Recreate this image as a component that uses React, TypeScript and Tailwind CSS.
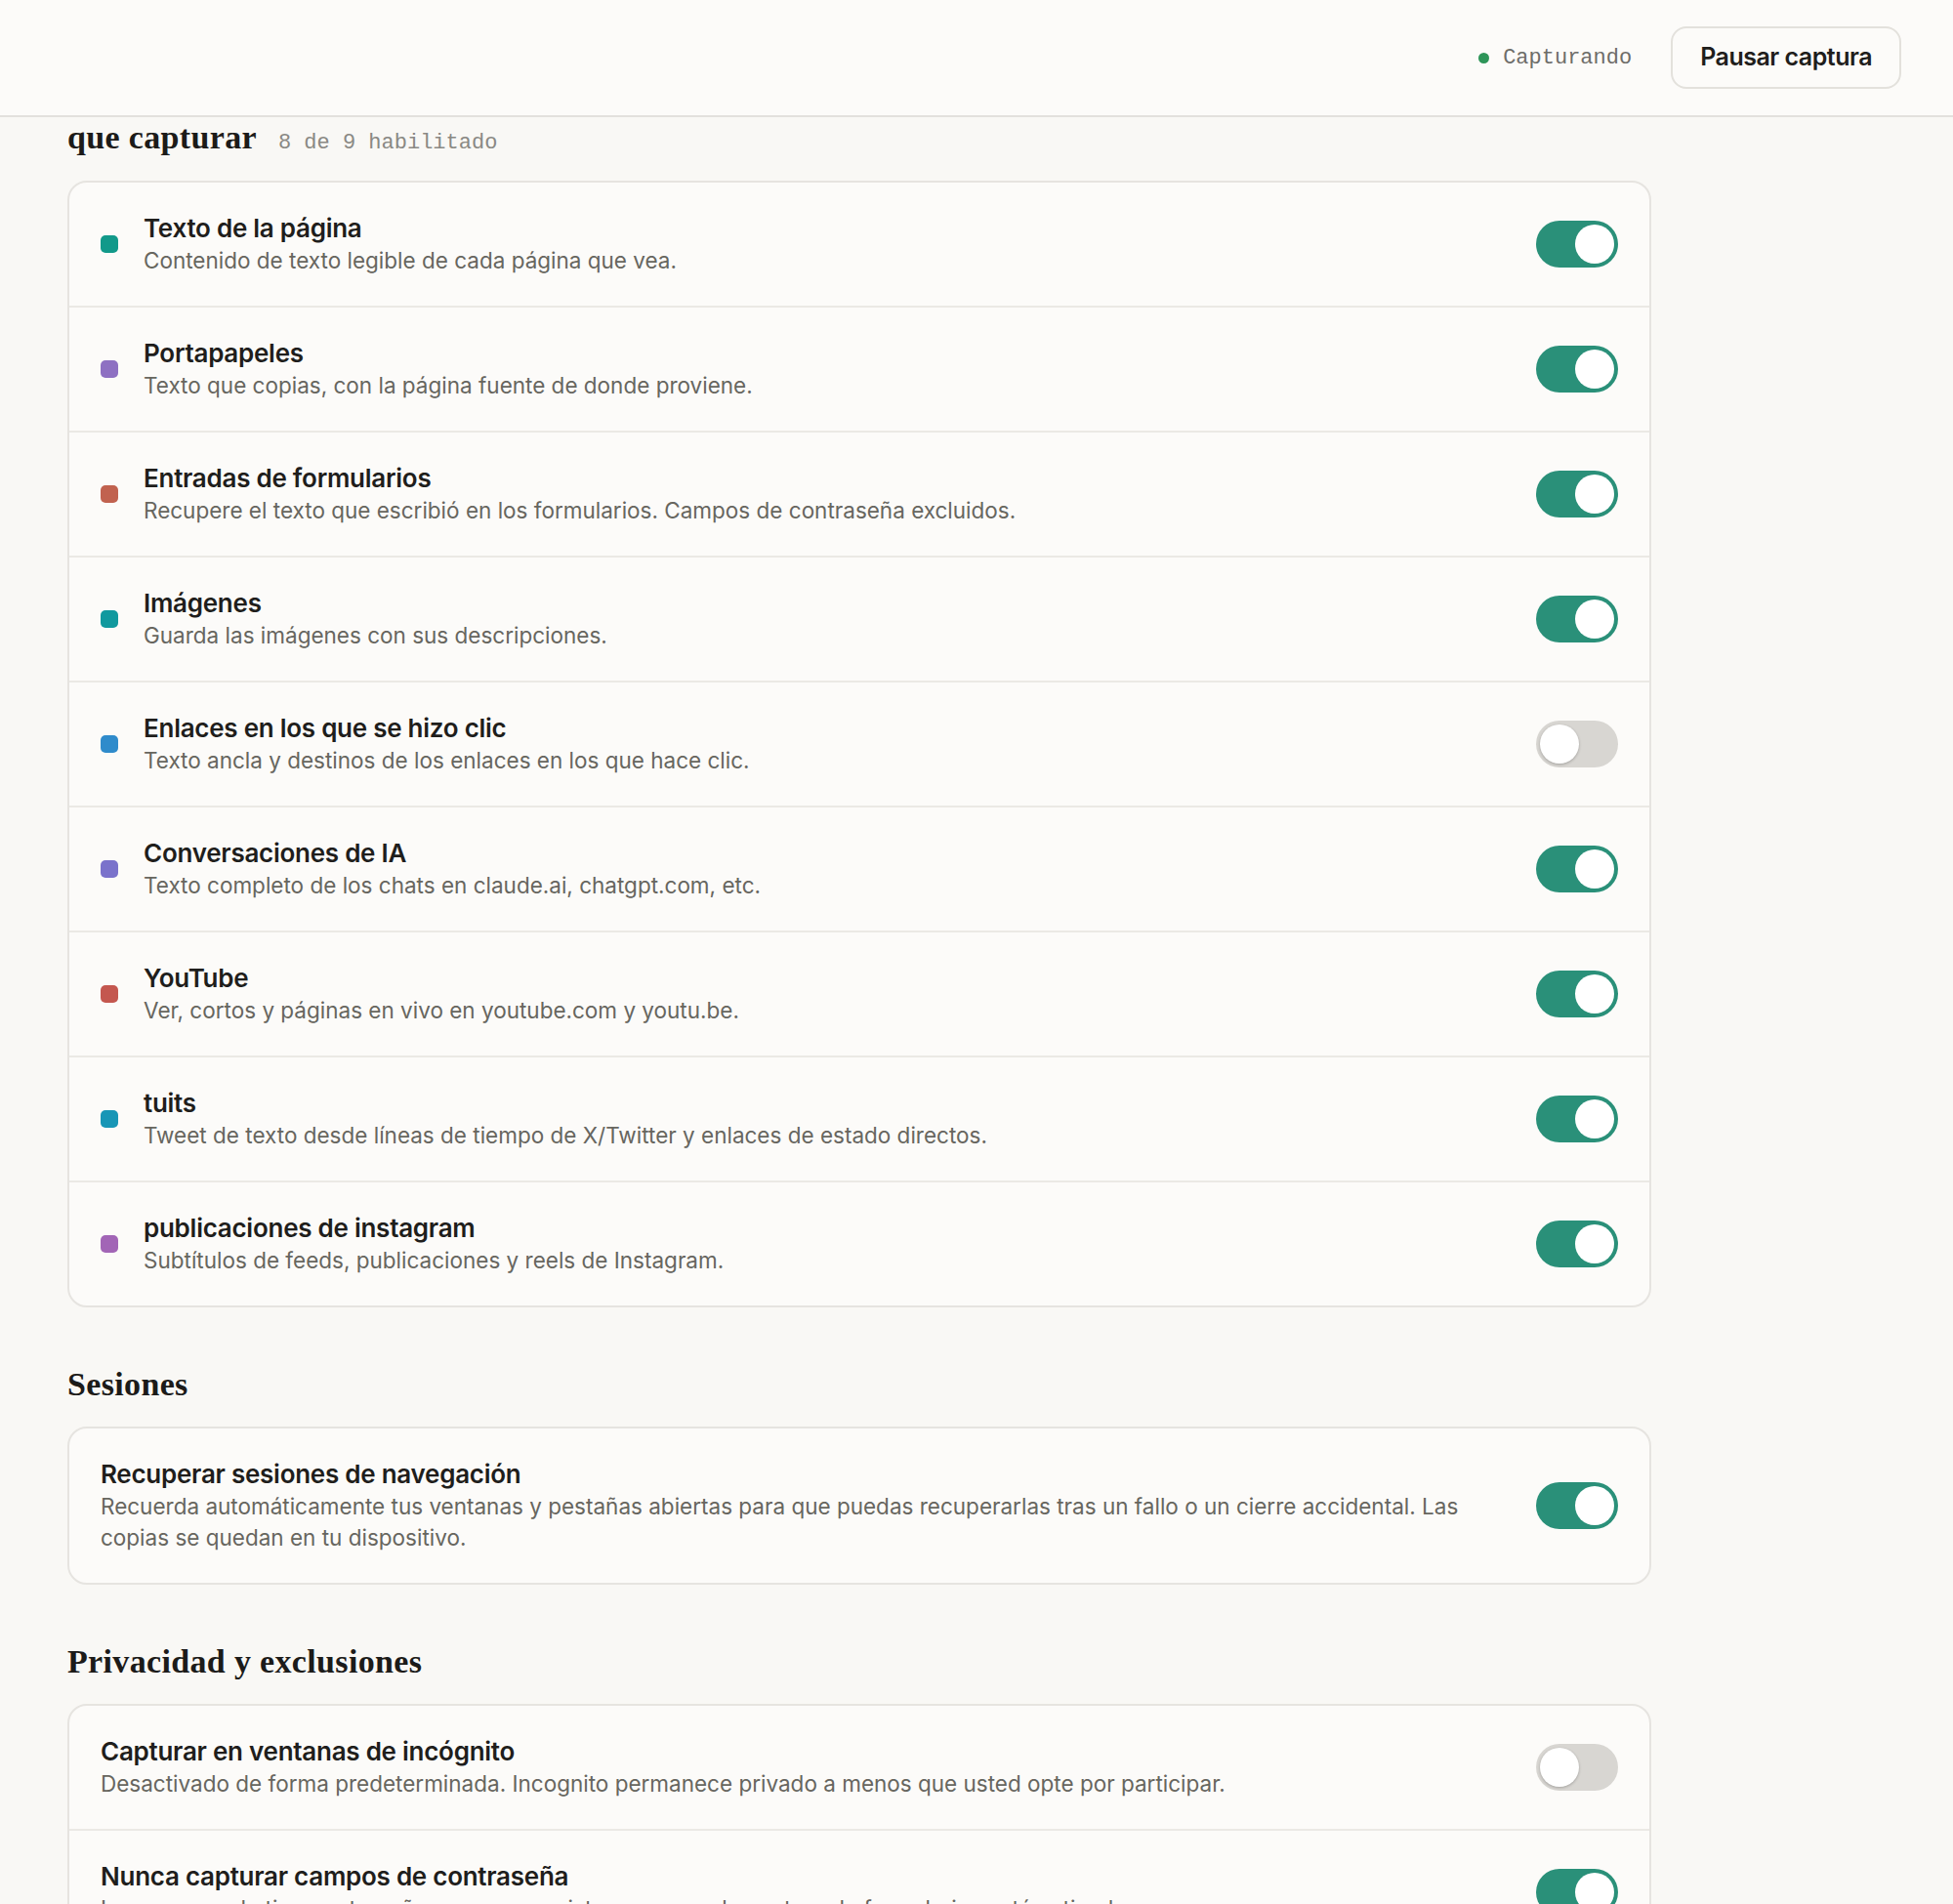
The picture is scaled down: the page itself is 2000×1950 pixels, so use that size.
import React, {useState} from "react";

interface Source {
    key: string
    title: string
    desc: string
    dot: string
    on: boolean
}

const sources: Source[] = [
    {key: "page", title: "Texto de la página", desc: "Contenido de texto legible de cada página que vea.", dot: "bg-[#12998a]", on: true},
    {key: "clip", title: "Portapapeles", desc: "Texto que copias, con la página fuente de donde proviene.", dot: "bg-[#8e70c2]", on: true},
    {key: "forms", title: "Entradas de formularios", desc: "Recupere el texto que escribió en los formularios. Campos de contraseña excluidos.", dot: "bg-[#c1624f]", on: true},
    {key: "img", title: "Imágenes", desc: "Guarda las imágenes con sus descripciones.", dot: "bg-[#11999e]", on: true},
    {key: "links", title: "Enlaces en los que se hizo clic", desc: "Texto ancla y destinos de los enlaces en los que hace clic.", dot: "bg-[#2f8bcb]", on: false},
    {key: "ai", title: "Conversaciones de IA", desc: "Texto completo de los chats en claude.ai, chatgpt.com, etc.", dot: "bg-[#7a72cb]", on: true},
    {key: "yt", title: "YouTube", desc: "Ver, cortos y páginas en vivo en youtube.com y youtu.be.", dot: "bg-[#c4574f]", on: true},
    {key: "tw", title: "tuits", desc: "Tweet de texto desde líneas de tiempo de X/Twitter y enlaces de estado directos.", dot: "bg-[#1896b6]", on: true},
    {key: "ig", title: "publicaciones de instagram", desc: "Subtítulos de feeds, publicaciones y reels de Instagram.", dot: "bg-[#a265b6]", on: true},
]

const Toggle = ({on, onClick}: {on: boolean, onClick: () => void}) => (
    <button
        onClick={onClick}
        className={`relative shrink-0 w-[84px] h-[48px] rounded-full transition-colors ${on ? "bg-[#2a9079]" : "bg-[#d8d6d2]"}`}
    >
        <span
            className={`absolute top-[4px] w-[40px] h-[40px] rounded-full bg-white transition-all ${on ? "left-[40px]" : "left-[4px] shadow-[0_1px_3px_rgba(0,0,0,0.25)]"}`}
        />
    </button>
)

const Row = ({title, desc, dot, on, onToggle, last}: {title: string, desc: string, dot?: string, on: boolean, onToggle: () => void, last?: boolean}) => (
    <div className={`flex items-center gap-[40px] px-[32px] py-[30px] ${last ? "" : "border-b-2 border-[#ebe9e5]"}`}>
        {dot && <span className={`w-[18px] h-[18px] rounded-[5px] shrink-0 -mr-[14px] ${dot}`}/>}
        <div className="flex-1 min-w-0">
            <p className="text-[26px] leading-[34px] font-semibold text-[#1f1e1c] tracking-[-0.01em]">{title}</p>
            <p className="text-[22.5px] leading-[32px] text-[#67665f]">{desc}</p>
        </div>
        <Toggle on={on} onClick={onToggle}/>
    </div>
)

const Heading = ({children}: {children: React.ReactNode}) => (
    <h2 className="mt-[59px] mb-[23px] font-['Liberation_Serif',serif] font-bold text-[34px] leading-[40px] text-[#1c1b19] tracking-[0.01em]">{children}</h2>
)

const App = () => {
    const [state, setState] = useState<Record<string, boolean>>(
        Object.fromEntries(sources.map(s => [s.key, s.on]))
    )
    const [sessions, setSessions] = useState(true)
    const [incognito, setIncognito] = useState(false)
    const [passwords, setPasswords] = useState(true)

    const enabled = Object.values(state).filter(Boolean).length

    return (
        <div className="min-h-screen bg-[#f9f8f5] font-['Inter',sans-serif]">
            <header className="h-[120px] bg-[#fcfbf9] border-b-2 border-[#e3e1dd] flex items-center justify-end pr-[53px] gap-[40px]">
                <div className="flex items-center gap-[14px]">
                    <span className="w-[11px] h-[11px] rounded-full bg-[#2e9559]"/>
                    <span className="font-['Liberation_Mono',monospace] text-[22px] text-[#6e6d69]">Capturando</span>
                </div>
                <button className="h-[64px] px-[28px] rounded-[16px] border-2 border-[#e3e1dc] bg-[#fcfbf9] text-[25px] font-semibold text-[#1f1e1c] tracking-[-0.02em]">
                    Pausar captura
                </button>
            </header>

            <main className="pl-[69px] w-[1691px] pb-[80px]">
                <div className="flex items-baseline gap-[22px] mb-[22px]">
                    <h2 className="font-['Liberation_Serif',serif] font-bold text-[34px] leading-[41px] text-[#1c1b19] tracking-[0.01em]">que capturar</h2>
                    <span className="font-['Liberation_Mono',monospace] text-[22px] text-[#8a8984]">{enabled} de {sources.length} habilitado</span>
                </div>
                <div className="rounded-[20px] border-2 border-[#e6e4e0] bg-[#fcfbf9] overflow-hidden">
                    {sources.map((s, i) => (
                        <Row
                            key={s.key}
                            title={s.title}
                            desc={s.desc}
                            dot={s.dot}
                            on={state[s.key]}
                            last={i === sources.length - 1}
                            onToggle={() => setState({...state, [s.key]: !state[s.key]})}
                        />
                    ))}
                </div>

                <Heading>Sesiones</Heading>
                <div className="rounded-[20px] border-2 border-[#e6e4e0] bg-[#fcfbf9] overflow-hidden">
                    <Row
                        title="Recuperar sesiones de navegación"
                        desc="Recuerda automáticamente tus ventanas y pestañas abiertas para que puedas recuperarlas tras un fallo o un cierre accidental. Las copias se quedan en tu dispositivo."
                        on={sessions}
                        last
                        onToggle={() => setSessions(!sessions)}
                    />
                </div>

                <Heading>Privacidad y exclusiones</Heading>
                <div className="rounded-[20px] border-2 border-[#e6e4e0] bg-[#fcfbf9] overflow-hidden">
                    <Row
                        title="Capturar en ventanas de incógnito"
                        desc="Desactivado de forma predeterminada. Incognito permanece privado a menos que usted opte por participar."
                        on={incognito}
                        onToggle={() => setIncognito(!incognito)}
                    />
                    <Row
                        title="Nunca capturar campos de contraseña"
                        desc="Los campos de tipo contraseña nunca se registran, aunque la captura de formularios esté activada."
                        on={passwords}
                        last
                        onToggle={() => setPasswords(!passwords)}
                    />
                </div>
            </main>
        </div>
    )
}

export default App
